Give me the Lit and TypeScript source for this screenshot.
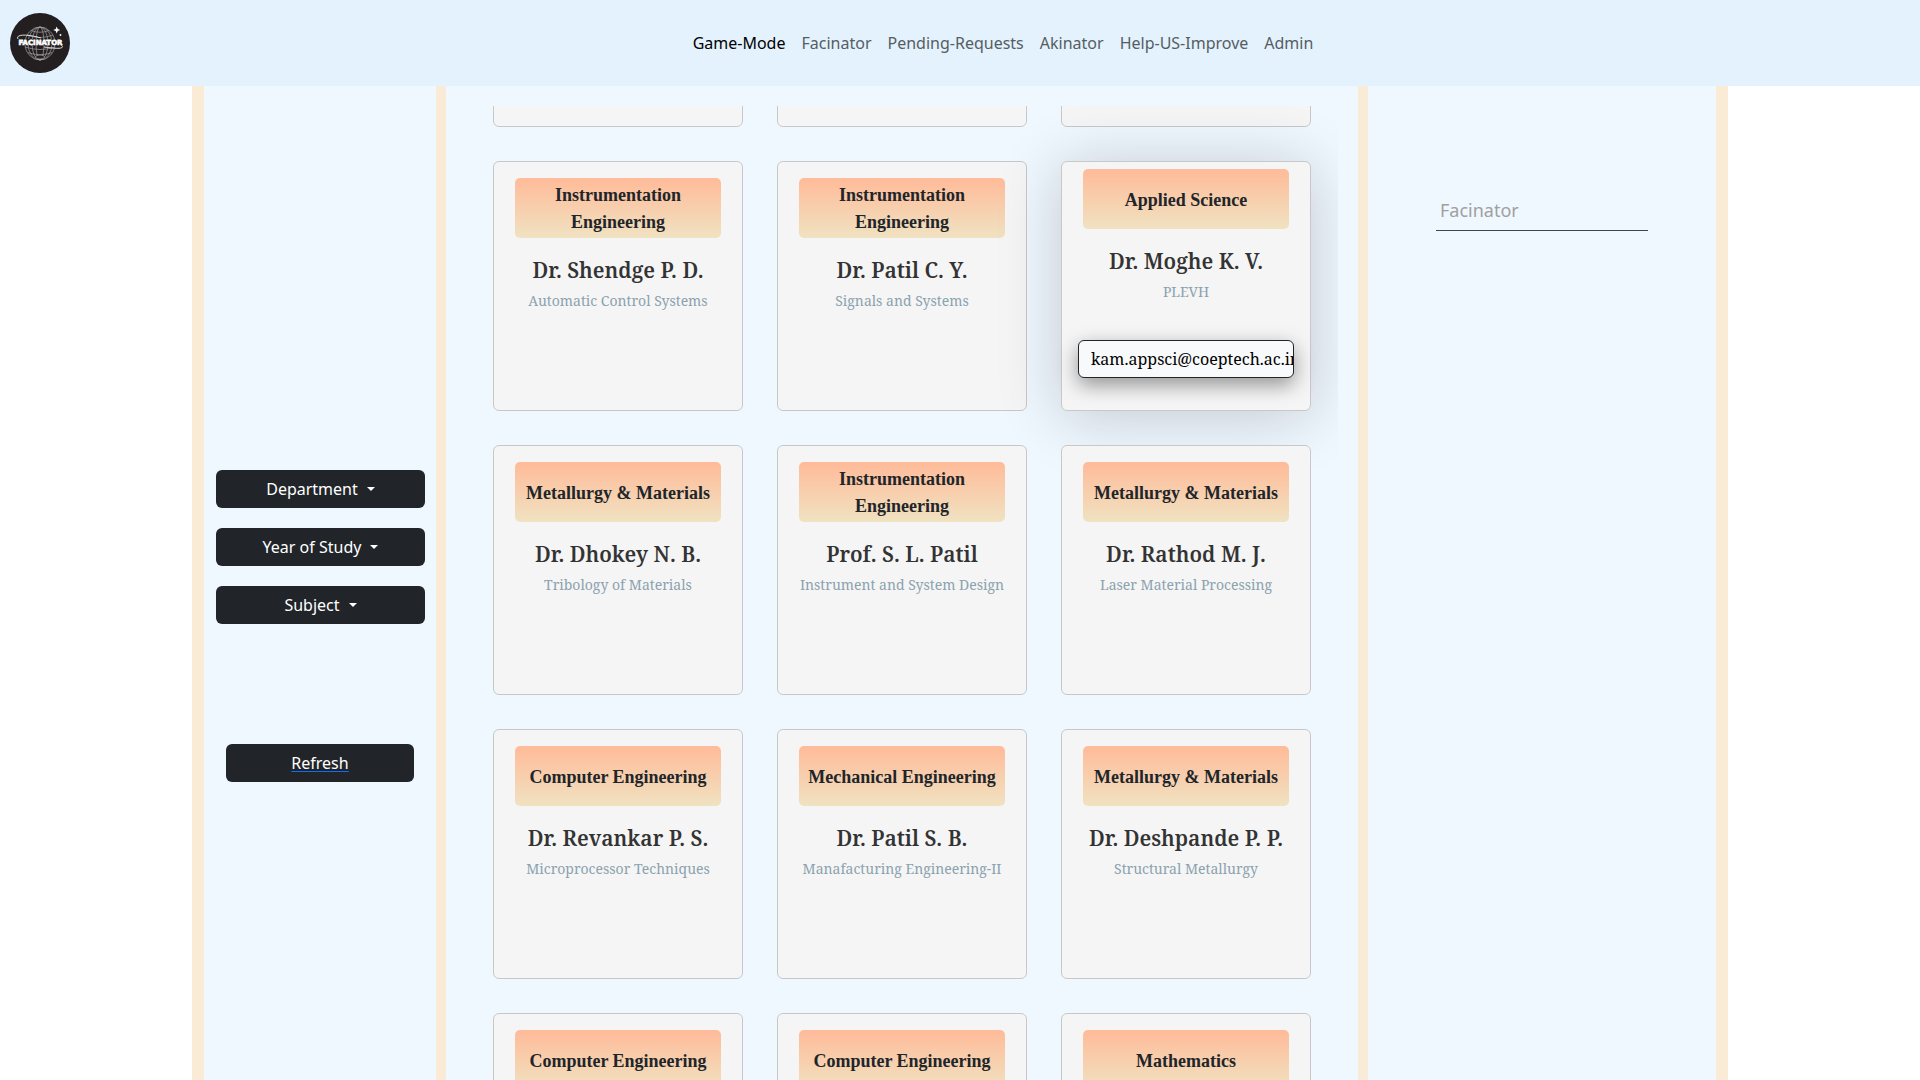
import { LitElement, html, css, svg, nothing } from "lit";
import { customElement, property, query } from "lit/decorators.js";
import { classMap } from "lit/directives/class-map.js";

interface Teacher {
  department: string;
  name: string;
  subject: string;
  email?: string;
}

const NAV = ["Game-Mode", "Facinator", "Pending-Requests", "Akinator", "Help-US-Improve", "Admin"];
const FILTERS = ["Department", "Year of Study", "Subject"];

const blank: Teacher = { department: "", name: "", subject: "" };

const TEACHERS: Teacher[] = [
  blank,
  blank,
  blank,
  { department: "Instrumentation Engineering", name: "Dr. Shendge P. D.", subject: "Automatic Control Systems" },
  { department: "Instrumentation Engineering", name: "Dr. Patil C. Y.", subject: "Signals and Systems" },
  { department: "Applied Science", name: "Dr. Moghe K. V.", subject: "PLEVH", email: "kam.appsci@coeptech.ac.in" },
  { department: "Metallurgy & Materials", name: "Dr. Dhokey N. B.", subject: "Tribology of Materials" },
  { department: "Instrumentation Engineering", name: "Prof. S. L. Patil", subject: "Instrument and System Design" },
  { department: "Metallurgy & Materials", name: "Dr. Rathod M. J.", subject: "Laser Material Processing" },
  { department: "Computer Engineering", name: "Dr. Revankar P. S.", subject: "Microprocessor Techniques" },
  { department: "Mechanical Engineering", name: "Dr. Patil S. B.", subject: "Manafacturing Engineering-II" },
  { department: "Metallurgy & Materials", name: "Dr. Deshpande P. P.", subject: "Structural Metallurgy" },
  { department: "Computer Engineering", name: "", subject: "" },
  { department: "Computer Engineering", name: "", subject: "" },
  { department: "Mathematics", name: "", subject: "" },
];

@customElement("site-logo")
class SiteLogo extends LitElement {
  static styles = css`
    :host {
      display: block;
      width: 60px;
      height: 60px;
    }
    .mark {
      display: block;
      width: 100%;
      height: 100%;
    }
    .word {
      font: 700 7px "DejaVu Sans", "Liberation Sans", sans-serif;
    }
  `;

  render() {
    return html`
      <svg class="mark" viewBox="0 0 60 60" role="img" aria-label="Facinator">
        <circle cx="30" cy="30" r="30" fill="#231f20" />
        <g fill="none" stroke="#a3a1a2" stroke-width="0.7">
          <ellipse cx="30" cy="30.500" rx="15" ry="16.500" />
          ${[4, 8, 12].map((rx) => svg`<ellipse cx="30" cy="30.5" rx=${rx} ry="16.5" />`)}
          <path d="M21 17.500Q30 21 39 17.500M17 22Q30 27 43 22M15 27Q30 32 45 27M15 34Q30 39 45 34M18 39.500Q30 44 42 39.500" />
        </g>
        <ellipse cx="30" cy="44" rx="4.500" ry="2" fill="#231f20" stroke="#bbb" stroke-width="0.6" />
        <path d="M8 26C5 21 18 21 31 25M51 32C56 36 47 36 34 34" fill="none" stroke="#eee" stroke-width="0.9" />
        <rect x="10" y="26" width="41" height="6" fill="#231f20" />
        <text
          class="word" x="30.500" y="31.500" text-anchor="middle"
          fill="#fff" stroke="#fff" stroke-width="0.6"
        >FACINATOR</text>
        <path d="M46.700 13.500L47.700 16L50.200 17L47.700 18L46.700 20.500L45.700 18L43.200 17L45.700 16Z" fill="#fff" />
        <circle cx="50.500" cy="22" r="0.9" fill="#fff" />
      </svg>
    `;
  }
}

@customElement("teacher-card")
class TeacherCard extends LitElement {
  @property({ attribute: false }) teacher: Teacher = blank;

  static styles = css`
    :host {
      display: block;
    }
    .card {
      box-sizing: border-box;
      height: 250px;
      padding: 16px 12px;
      display: flex;
      flex-direction: column;
      align-items: center;
      text-align: center;
      font-family: "Noto Serif", "Droid Serif", "DejaVu Serif", serif;
      background: whitesmoke;
      border: 1px solid #c8c8c8;
      border-radius: 6px;
    }
    .active {
      padding-top: 7px;
      box-shadow: 0 5px 65px rgba(0, 0, 0, 0.2);
    }
    .department {
      box-sizing: border-box;
      width: 206px;
      height: 60px;
      padding-top: 2px;
      flex: none;
      display: flex;
      align-items: center;
      justify-content: center;
      border-radius: 5px;
      background: linear-gradient(#ffbb99, #f0e2c1);
      color: #212529;
      font: bold 18px/27px "Liberation Serif", "Times New Roman", serif;
    }
    .name {
      margin: 16px 0 0;
      color: #333;
      font-size: 21px;
      font-weight: 600;
      line-height: 32px;
    }
    .subject {
      margin: 4px 0 0;
      color: #8ba2af;
      font-size: 14px;
      line-height: 21px;
    }
    .email {
      box-sizing: border-box;
      width: 216px;
      height: 38px;
      margin-top: 38px;
      padding: 6px 12px;
      overflow: hidden;
      border: 1px solid #212529;
      border-radius: 6px;
      background: #f8f9fa;
      color: #000;
      font-size: 16px;
      line-height: 24px;
      text-align: left;
      text-decoration: none;
      white-space: nowrap;
      box-shadow: 0 7px 20px rgba(0, 0, 0, 0.4);
    }
  `;

  render() {
    const t = this.teacher;
    return html`
      <article class=${classMap({ card: true, active: !!t.email })}>
        ${t.department ? html`<div class="department">${t.department}</div>` : nothing}
        ${t.name ? html`<h2 class="name">${t.name}</h2><p class="subject">${t.subject}</p>` : nothing}
        ${t.email ? html`<a class="email" href="mailto:${t.email}">${t.email}</a>` : nothing}
      </article>
    `;
  }
}

@customElement("app-root")
class AppRoot extends LitElement {
  @query(".list") private list!: HTMLElement;

  static styles = css`
    :host {
      display: flex;
      flex-direction: column;
      height: 100vh;
      overflow: hidden;
      background: #fff;
      font: 16px/24px "Noto Sans", sans-serif;
    }
    .header {
      flex: none;
      display: flex;
      align-items: center;
      gap: 16px;
      padding: 13px 0 13px 10px;
      background: #e3f2fd;
    }
    .nav {
      flex: 1;
      display: flex;
      justify-content: center;
      gap: 16px;
    }
    .link {
      color: #565d62;
      text-decoration: none;
    }
    .current {
      color: #000;
    }
    .columns {
      flex: 1;
      min-height: 0;
      width: 80%;
      margin: 0 auto;
      display: grid;
      grid-template-columns: 61fr 233fr 90fr;
      grid-template-rows: minmax(0, 1fr);
      background: aliceblue;
    }
    .filters,
    .board,
    .search {
      box-sizing: border-box;
      min-width: 0;
      border: 0 solid antiquewhite;
    }
    .filters {
      border-left-width: 12px;
      display: flex;
      flex-direction: column;
      align-items: stretch;
      gap: 20px;
      padding: 384px 11px 0 12px;
    }
    .board {
      border-left-width: 10px;
      border-right-width: 10px;
      padding: 20px 20px 0;
    }
    .search {
      border-right-width: 12px;
      padding-top: 104px;
      display: flex;
      flex-direction: column;
      align-items: center;
    }
    .button {
      box-sizing: border-box;
      padding: 7px 12px;
      display: flex;
      align-items: center;
      justify-content: center;
      gap: 9px;
      border: 0;
      border-radius: 6px;
      background: #212529;
      color: #fff;
      font: inherit;
    }
    .caret {
      border: 4px solid transparent;
      border-top-color: #fff;
      border-bottom: 0;
    }
    .refresh {
      margin: 100px 11px 0 10px;
    }
    .underlined {
      text-decoration: underline 1px #0d6efd;
      text-underline-offset: 2px;
      text-decoration-skip-ink: none;
    }
    .list {
      height: 100%;
      box-sizing: border-box;
      overflow: auto;
      scrollbar-width: none;
      padding: 17px 27px;
      display: grid;
      grid-template-columns: repeat(3, 250px);
      justify-content: center;
      align-content: start;
      gap: 34px;
    }
    .field {
      box-sizing: border-box;
      width: 212px;
      height: 41px;
      padding: 0 4px;
      border: 0;
      border-bottom: 1px solid #444;
      border-radius: 0;
      outline: 0;
      background: transparent;
      font: 18px/27px "Noto Sans", sans-serif;
    }
    .field::placeholder {
      color: #a0a0a0;
      opacity: 1;
    }
  `;

  async firstUpdated() {
    await Promise.all(
      [...this.list.querySelectorAll<LitElement>("teacher-card")].map((c) => c.updateComplete)
    );
    // Open the list just before the end of its first row.
    this.list.scrollTop = 246;
  }

  render() {
    return html`
      <header class="header">
        <site-logo></site-logo>
        <nav class="nav">
          ${NAV.map((n, i) => html`<a class=${classMap({ link: true, current: i === 0 })} href="#">${n}</a>`)}
        </nav>
      </header>
      <div class="columns">
        <aside class="filters">
          ${FILTERS.map((f) => html`<button class="button" type="button">${f}<span class="caret"></span></button>`)}
          <button class="button refresh" type="button"><span class="underlined">Refresh</span></button>
        </aside>
        <main class="board">
          <div class="list">
            ${TEACHERS.map((t) => html`<teacher-card .teacher=${t}></teacher-card>`)}
          </div>
        </main>
        <section class="search">
          <input class="field" type="text" placeholder="Facinator" aria-label="Facinator" />
        </section>
      </div>
    `;
  }
}
